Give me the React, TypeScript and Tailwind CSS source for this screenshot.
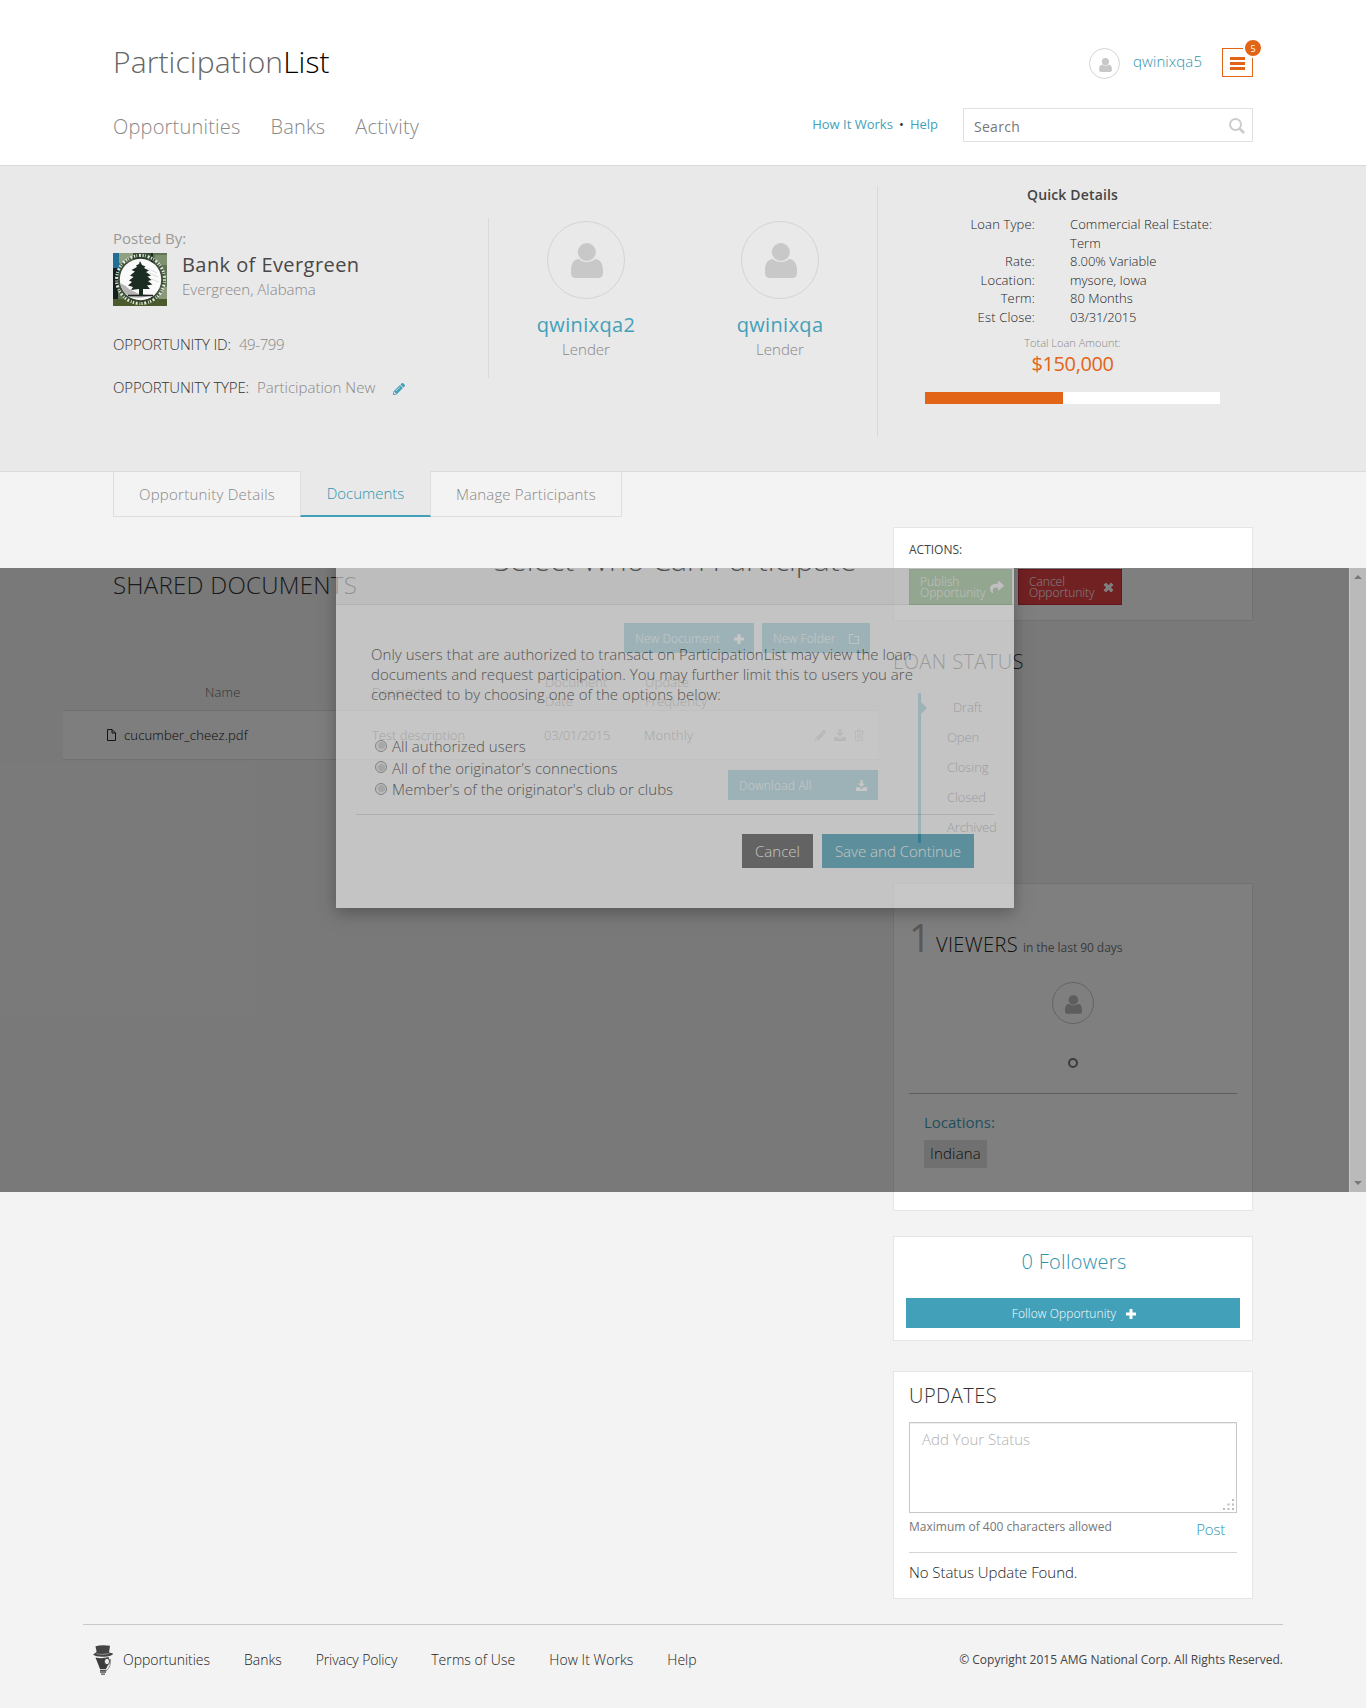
import type { ReactNode } from 'react';
import { FaPencilAlt, FaShare } from 'react-icons/fa';

function UserIcon({ className }: { className: string }) {
  return (
    <svg viewBox="0 0 96 105" className={className} fill="currentColor">
      <circle cx="47.500" cy="27" r="27" />
      <path d="M24 48C34 60 62 60 72 48C88 49 96 62 96 82V90Q96 105 81 105H15Q0 105 0 90V82C0 62 8 49 24 48Z" />
    </svg>
  );
}

function PlusIcon({ className }: { className: string }) {
  return (
    <svg viewBox="0 0 10 10" className={className} fill="currentColor">
      <path d="M3.500 0.500Q3.500 0 4 0H6Q6.500 0 6.500 0.500V3.500H9.500Q10 3.500 10 4V6Q10 6.500 9.500 6.500H6.500V9.500Q6.500 10 6 10H4Q3.500 10 3.500 9.500V6.500H0.500Q0 6.500 0 6V4Q0 3.500 0.500 3.500H3.500Z" />
    </svg>
  );
}

function DownloadIcon({ className }: { className: string }) {
  return (
    <svg viewBox="0 0 12 12" className={className} fill="currentColor">
      <path d="M4.800 0H7.200V3.800H9.800L6 7.800L2.200 3.800H4.800Z" />
      <path d="M0.600 8H3.600L6 10.200L8.400 8H11.400Q12 8 12 8.600V11.400Q12 12 11.400 12H0.600Q0 12 0 11.400V8.600Q0 8 0.600 8Z" />
    </svg>
  );
}

function FileIcon() {
  return (
    <svg viewBox="0 0 10 12" className="h-3 w-2.5" fill="none" stroke="currentColor" strokeWidth="0.900">
      <path d="M1.500 0.500H6L9.500 4V11.500H1.500Z" />
      <path d="M6 0.500V4H9.500" />
    </svg>
  );
}

function TrashIcon() {
  return (
    <svg viewBox="0 0 10 12" className="h-3 w-2.5" fill="none" stroke="currentColor" strokeWidth="0.800">
      <path d="M0 2.500H10M3.500 2.500V0.800H6.500V2.500M1.500 2.500V11.500H8.500V2.500M3.700 4.500V9.500M5 4.500V9.500M6.300 4.500V9.500" />
    </svg>
  );
}

function FolderIcon() {
  return (
    <svg viewBox="0 0 12 10" className="h-2.5 w-3" fill="none" stroke="currentColor" strokeWidth="0.800">
      <path d="M1.500 0.500V9.500H10.500V2.500H6.500M1.500 0.500H5.500" />
    </svg>
  );
}

function BankLogo() {
  return (
    <svg viewBox="0 0 54 53" className="h-[53px] w-[54px] shrink-0">
      <rect width="54" height="53" fill="#5f7355" />
      <rect width="6" height="22" fill="#1f6f96" />
      <rect y="15" width="5" height="32" fill="#14201f" />
      <rect x="6" y="0" width="14" height="10" fill="#8fa083" />
      <rect x="20" width="18" height="6" fill="#3a4e38" />
      <rect x="38" width="2" height="53" fill="#1d2a20" />
      <rect x="42" y="2" width="12" height="10" fill="#7d9170" />
      <rect x="46" y="34" width="8" height="12" fill="#8b9a7c" />
      <rect y="46" width="54" height="7" fill="#4a5a2c" />
      <circle cx="27.500" cy="26.500" r="22.500" fill="none" stroke="#1d2b20" strokeWidth="4" opacity="0.500" />
      <circle cx="27.500" cy="26.500" r="24" fill="none" stroke="#dfe6da" strokeWidth="3" strokeDasharray="1.300 1.200 .8 1.900 2 1.600" />
      <circle cx="27.500" cy="26.500" r="20.700" fill="#fafafa" />
      <path d="M7 30Q12 32 16 36Q22 39 26 41L38 42Q30 46 17 44Q9 39 7 30Z" fill="#b4b4b4" />
      <path d="M34 15L44 20M36 20L45 24M38 26L46 29" stroke="#ddd" strokeWidth="1" />
      <path d="M15 42.500H40" stroke="#222" strokeWidth="1.500" />
      <path
        d="M27 8L29 12L32.500 13.500L31 15L36 17.500L33 19L38 22.500L34.500 23.500L38.500 27L35 28L39.500 31.500L34 32.500L37 36L30 36V43H26V36L18 37L20 34L15 32.500L19 29L16 27.500L20.500 24L17 22.500L22 18.500L18.500 17L24 14L23 12.500L26 11Z"
        fill="#1c2d24"
      />
    </svg>
  );
}

function FooterLogo() {
  return (
    <svg viewBox="0 0 20 30" className="h-[30px] w-5">
      <path d="M2.500 1.200Q9 -0.500 17 0.800L16 8Q9 9 3.800 8Z" fill="#444" />
      <path d="M0 9.800L3.500 7Q10 9 16 7.500L20 8.500Q20 10.500 14 11.500Q4 12.500 0 9.800Z" fill="#444" />
      <path d="M3.500 8.800Q10 10.300 16 8.600" fill="none" stroke="#aaa" strokeWidth="0.700" />
      <path d="M2.500 12.500Q9 14 15.500 12L17 16L13 24H7Z" fill="#3c3c3c" />
      <ellipse cx="14" cy="16.500" rx="2.500" ry="3.200" fill="#f2f2f2" stroke="#444" />
      <path d="M17.500 14Q18 22 13.500 25.500" fill="none" stroke="#777" strokeWidth="0.800" />
      <path d="M7 25.500H13.500M7 27.200H13M8 29.200H12" stroke="#555" strokeWidth="1.300" />
    </svg>
  );
}

function Lender({ name }: { name: string }) {
  return (
    <div className="flex w-[194px] flex-col items-center pt-[3px]">
      <div className="flex size-[78px] items-center justify-center rounded-full border border-[#d4d4d4] text-[#c8c8c8]">
        <UserIcon className="ml-px mt-px h-[35px] w-8" />
      </div>
      <div className="mt-[12px] text-[20px] font-medium leading-7 tracking-[0.35px] text-[#43a0b9]">{name}</div>
      <div className="text-[15px] font-light leading-5 text-[#888]">Lender</div>
    </div>
  );
}

const details: [string, string][] = [
  ['Loan Type:', 'Commercial Real Estate: Term'],
  ['Rate:', '8.00% Variable'],
  ['Location:', 'mysore, Iowa'],
  ['Term:', '80 Months'],
  ['Est Close:', '03/31/2015'],
];

function Panel({ className, children }: { className: string; children: ReactNode }) {
  return <section className={`border border-[#e5e5e5] bg-white ${className}`}>{children}</section>;
}

function Header() {
  return (
    <header className="h-[166px] border-b border-[#d9d9d9] bg-white">
      <div className="mx-auto flex w-[1140px] justify-between">
        <div className="pt-[42px]">
          <div className="text-[30px] font-light leading-10 tracking-[0.1px] text-[#666]">
            Participation<span className="text-black">List</span>
          </div>
          <nav className="mt-[31px] flex gap-[30px] text-[20px] font-light leading-7 tracking-[0.19px] text-[#888]">
            <a>Opportunities</a>
            <a>Banks</a>
            <a>Activity</a>
          </nav>
        </div>
        <div className="flex flex-col items-end pt-12">
          <div className="flex">
            <div className="flex size-[31px] items-center justify-center rounded-full border border-[#d4d4d4] text-[#c8c8c8]">
              <UserIcon className="ml-[2px] mt-[2px] h-[14px] w-[13px]" />
            </div>
            <div className="ml-[13px] mt-[3px] w-[89px] text-[15px] font-light leading-5 tracking-[0.08px] text-[#2f93ae]">qwinixqa5</div>
            <div className="relative flex h-[29px] w-[31px] flex-col items-center justify-center gap-[2px] border border-[#e26417] pt-px">
              <div className="h-[3px] w-[15px] bg-[#e26417]" />
              <div className="h-[3px] w-[15px] bg-[#e26417]" />
              <div className="h-[3px] w-[15px] bg-[#e26417]" />
              <div className="absolute -right-[11px] -top-[11px] flex size-5 items-center justify-center rounded-full border-2 border-white bg-[#e26417] text-[9px] leading-none text-white">
                5
              </div>
            </div>
          </div>
          <div className="mt-[29px] flex">
            <div className="mt-[6px] flex text-[13px] leading-5 text-[#43a0b9]">
              <a>How It Works</a>
              <span className="w-[17px] text-center text-[#333]">•</span>
              <a>Help</a>
            </div>
            <div className="ml-[25px] flex h-[34px] w-[290px] items-center justify-between border border-[#e0e0e0] pl-[10px] pr-[7px]">
              <span className="mt-[3px] text-[14px] leading-5 tracking-[0.28px] text-[#777]">Search</span>
              <svg viewBox="0 0 16 16" className="mt-px size-4" fill="none" stroke="#ccc">
                <circle cx="6.500" cy="6.500" r="5.500" strokeWidth="2" />
                <path d="M10.500 10.500L15 15" strokeWidth="2.600" />
              </svg>
            </div>
          </div>
        </div>
      </div>
    </header>
  );
}

function Hero() {
  return (
    <section className="h-[306px] border-b border-[#dadada] bg-[#e9e9e9]">
      <div className="mx-auto flex w-[1140px] items-start">
        <div className="w-[375px] pt-[62px]">
          <div className="text-[15px] leading-5 text-[#999]">Posted By:</div>
          <div className="mt-[5px] flex items-start">
            <BankLogo />
            <div className="-mt-[2px] ml-[15px]">
              <div className="text-[20px] font-medium leading-7 tracking-[0.43px] text-[#484848]">Bank of Evergreen</div>
              <div className="text-[15px] font-light leading-5 text-[#888]">Evergreen, Alabama</div>
            </div>
          </div>
          <div className="mt-7 flex text-[15px] font-light leading-5 text-[#888]">
            <span className="mr-2 tracking-[-0.160px] text-[#333]">OPPORTUNITY ID:</span>
            <span className="tracking-[-0.400px]">49-799</span>
          </div>
          <div className="mt-[23px] flex text-[15px] font-light leading-5 text-[#888]">
            <span className="mr-2 tracking-[-0.160px] text-[#333]">OPPORTUNITY TYPE:</span>
            <span>Participation New</span>
            <FaPencilAlt className="ml-[18px] mt-[6px] size-3 text-[#43a0b9]" />
          </div>
        </div>
        <div className="mt-[52px] flex h-40 w-[389px] border-l border-[#d9d9d9]">
          <Lender name="qwinixqa2" />
          <Lender name="qwinixqa" />
        </div>
        <div className="mt-5 h-[251px] border-l border-[#d9d9d9] pl-[47px]">
          <div className="-mt-px w-[295px]">
            <div className="text-center text-[14px] font-semibold leading-5 tracking-[0.15px] text-[#444]">Quick Details</div>
            <dl className="mt-[10px] grid grid-cols-[110px_150px] gap-x-[35px] text-[13px] font-light leading-[18.570px] text-[#222]">
              {details.map(([k, v]) => (
                <div key={k} className="contents">
                  <dt className="text-right tracking-[0.15px]">{k}</dt>
                  <dd className={k === 'Est Close:' ? 'tracking-[-0.200px]' : k === 'Loan Type:' ? 'tracking-[0.08px]' : ''}>{v}</dd>
                </div>
              ))}
            </dl>
            <div className="mt-[9px] text-center text-[11px] font-light leading-4 text-[#888]">Total Loan Amount:</div>
            <div className="mt-px text-center text-[20px] font-medium leading-6 tracking-[-0.400px] text-[#e26417]">$150,000</div>
            <div className="mt-[16px] h-3 bg-white">
              <div className="h-full w-[138px] bg-[#e26417]" />
            </div>
          </div>
        </div>
      </div>
    </section>
  );
}

function SharedDocuments() {
  return (
    <div className="w-[780px] pr-[15px] pt-[52px]">
      <h2 className="text-[24px] font-light leading-8 tracking-[0.26px] text-[#333]">SHARED DOCUMENTS</h2>
      <div className="mt-[22px] flex justify-end gap-2 pr-2 text-[12px] font-light tracking-[0.12px] text-white">
        <div className="flex h-[30px] w-[130px] items-center justify-between bg-[#43a0b9] pl-[11px] pr-[10px] pt-px">
          New Document
          <PlusIcon className="size-[10px]" />
        </div>
        <div className="flex h-[30px] w-[108px] items-center justify-between bg-[#43a0b9] pl-[11px] pr-[10px] pt-px">
          New Folder
          <FolderIcon />
        </div>
      </div>
      <div className="-ml-[50px] text-[13px] font-light text-[#666]">
        <div className="grid h-[57px] grid-cols-[308px_172px_101px_80px] items-center pt-[20px] leading-[19px] tracking-[0.15px]">
          <span className="pl-[142px]">Name</span>
          <span className="pl-px">Description</span>
          <span className="w-16 pl-[2px]">Document Date</span>
          <span className="w-16 pl-px">Update Frequency</span>
        </div>
        <div className="grid h-[50px] grid-cols-[308px_172px_101px_171px_auto] items-center border-y border-[#e0e0e0] bg-[#fcfcfc] leading-5 text-[#555]">
          <span className="flex items-center pl-[43px] tracking-[0.15px] text-[#111]">
            <FileIcon />
            <span className="ml-2">cucumber_cheez.pdf</span>
          </span>
          <span className="pl-px">Test description</span>
          <span className="pl-px tracking-[-0.200px]">03/01/2015</span>
          <span className="tracking-[0.25px]">Monthly</span>
          <span className="flex items-center gap-[8px] text-[#bbb]">
            <FaPencilAlt className="size-[11px]" />
            <DownloadIcon className="size-3" />
            <TrashIcon />
          </span>
        </div>
      </div>
      <div className="ml-auto mt-[10px] flex h-[30px] w-[150px] items-center justify-between bg-[#43a0b9] pl-[11px] pr-[11px] pt-px text-[12px] font-light tracking-[0.2px] text-white">
        Download All
        <DownloadIcon className="size-[11px]" />
      </div>
    </div>
  );
}

function Sidebar() {
  return (
    <aside className="w-[360px] pt-[10px]">
      <Panel className="h-[94px] px-[15px] pt-[14px]">
        <div className="text-[12px] leading-4 text-[#444]">ACTIONS:</div>
        <div className="mt-[11px] flex gap-[6px] text-[12px] font-light leading-[11px] text-white">
          <div className="flex h-9 w-[103px] items-center border border-[#2a7a1e] bg-[#348a27] pl-[10px]">
            <span className="w-[66px]">Publish Opportunity</span>
            <FaShare className="ml-1 size-[14px]" />
          </div>
          <div className="flex h-9 w-[104px] items-center border border-[#c62f34] bg-[#e44247] pl-[10px]">
            <span className="w-[66px]">Cancel Opportunity</span>
            <PlusIcon className="ml-2 size-[11px] rotate-45" />
          </div>
        </div>
      </Panel>

      <h3 className="mt-[27px] text-[20px] font-light leading-7 tracking-[0.4px] text-[#333]">LOAN STATUS</h3>
      <div className="ml-[25px] mt-[17px] flex h-[150px]">
        <div className="w-[3px] bg-[#43a0b9]" />
        <div className="mt-[9px] size-0 border-y-[6px] border-l-[6px] border-y-transparent border-l-[#43a0b9]" />
        <ul className="ml-5 mt-1 space-y-[10px] text-[13px] font-light leading-5 tracking-[-0.100px] text-[#333]">
          <li className="pl-[6px]">Draft</li>
          <li>Open</li>
          <li>Closing</li>
          <li>Closed</li>
          <li>Archived</li>
        </ul>
      </div>

      <Panel className="mt-10 h-[328px] px-[15px] pt-[34px]">
        <div className="flex h-[38px] items-baseline">
          <span className="w-[27px] text-[38px] font-medium leading-[39px] text-[#b5b2ae]">1</span>
          <span className="text-[20px] font-light leading-7 tracking-[0.38px] text-[#222]">VIEWERS</span>
          <span className="ml-[5px] text-[12px] leading-4 tracking-[-0.050px] text-[#777]">in the last 90 days</span>
        </div>
        <div className="mx-auto mt-[26px] flex size-[42px] items-center justify-center rounded-full border border-[#c8c8c8] text-[#bbb]">
          <UserIcon className="ml-px mt-[2px] h-[19px] w-[17px]" />
        </div>
        <div className="mx-auto mt-[34px] size-[10px] rounded-full border-2 border-[#777]" />
        <div className="mt-[25px] h-px bg-[#bbb]" />
        <div className="ml-[15px] mt-[18px] text-[15px] leading-5 text-[#43a0b9]">Locations:</div>
        <div className="ml-[15px] mt-2 h-7 w-[63px] bg-[#e0e0e0] pl-[6px] pt-[3px] text-[15px] font-light leading-5 tracking-[0.18px] text-[#222]">
          Indiana
        </div>
      </Panel>

      <Panel className="mt-[25px] h-[105px] px-3 pt-[11px]">
        <div className="pl-[2px] text-center text-[20px] font-light leading-7 tracking-[0.3px] text-[#2f93ae]">0 Followers</div>
        <div className="mt-[22px] flex h-[30px] items-center justify-center gap-[10px] bg-[#43a0b9] pl-[2px] pt-px text-[12px] font-light tracking-[0.08px] text-white">
          Follow Opportunity
          <PlusIcon className="size-[10px]" />
        </div>
      </Panel>

      <Panel className="mt-[30px] h-[228px] px-[15px] pt-[10px]">
        <h3 className="text-[20px] font-light leading-7 tracking-[0.5px] text-[#333]">UPDATES</h3>
        <div className="relative mt-[12px] h-[91px] border border-[#c8c8c8] pl-3 pt-[6px] text-[15px] font-light leading-5 text-[#b0b0b0] shadow-[inset_0_1px_1px_rgba(0,0,0,0.075)]">
          Add Your Status
          <svg viewBox="0 0 12 12" className="absolute bottom-px right-px size-3" fill="#bbb">
            <path d="M9 0h2v2h-2zM9 4.500h2v2h-2zM9 9h2v2h-2zM4.500 4.500h2v2h-2zM4.500 9h2v2h-2zM0 9h2v2h-2z" />
          </svg>
        </div>
        <div className="flex justify-between pr-3">
          <span className="mt-[6px] text-[12px] leading-4 text-[#777]">Maximum of 400 characters allowed</span>
          <a className="mt-[6px] text-[15px] font-light leading-5 tracking-[-0.200px] text-[#2f93ae]">Post</a>
        </div>
        <div className="mt-[13px] h-px bg-[#d4d4d4]" />
        <p className="mt-[9px] text-[15px] font-light leading-5 tracking-[-0.060px] text-[#222]">No Status Update Found.</p>
      </Panel>
    </aside>
  );
}

function ParticipantDialog() {
  return (
    <div className="absolute left-[336px] -top-[48px] h-[388px] w-[678px] bg-white font-light text-[#333] opacity-[0.56] shadow-[0_5px_15px_rgba(0,0,0,0.5)]">
      <div className="h-[85px] border-b border-[#e0e0e0] bg-[#f2f2f2] pt-[20px] text-center text-[30px] leading-10 tracking-[0.05px]">Select Who Can Participate</div>
      <div className="ml-[35px] mt-[39px] whitespace-nowrap text-[15px] leading-5 tracking-[0.03px]">
        Only users that are authorized to transact on ParticipationList may view the loan
        <br />
        documents and request participation. You may further limit this to users you are
        <br />
        connected to by choosing one of the options below:
      </div>
      <div className="ml-[39px] mt-8 text-[15px] leading-[21.500px] tracking-[0.03px]">
        {['All authorized users', "All of the originator's connections", "Member's of the originator's club or clubs"].map((label) => (
          <label key={label} className="flex h-[21.500px] items-start">
            <span className="mr-[5px] mt-[3.500px] flex size-3 items-center justify-center rounded-full border border-[#8a8a8a] bg-[#eee]">
              <span className="size-[7px] rounded-full bg-[#c4c8cc]" />
            </span>
            <span>{label}</span>
          </label>
        ))}
      </div>
      <div className="ml-[20px] mr-5 mt-[13.500px] h-px bg-[#d8d8d8]" />
      <div className="mt-[19px] flex justify-end gap-[9px] pr-10 text-[15px] leading-[35px] text-white">
        <div className="h-[34px] w-[71px] bg-[#525252] text-center">Cancel</div>
        <div className="h-[34px] w-[152px] bg-[#46a1b6] text-center">Save and Continue</div>
      </div>
    </div>
  );
}

export default function App() {
  return (
    <div className="relative h-[1708px] w-[1366px] overflow-hidden bg-[#f3f3f3] font-['Open_Sans',sans-serif]">
      <Header />
      <Hero />
      <main className="mx-auto w-[1140px]">
        <div className="flex text-[15px] font-light leading-5 text-[#888]">
          <div className="h-[45px] w-[187px] border-b border-l border-[#dedede] pt-3 text-center tracking-[0.24px]">Opportunity Details</div>
          <div className="relative -mt-px h-[46px] w-[131px] border-x border-b-2 border-x-[#dedede] border-b-[#43a0b9] bg-[#e9e9e9] pt-3 text-center text-[#2f93ae]">
            Documents
          </div>
          <div className="h-[45px] w-[191px] border-b border-r border-[#dedede] pt-3 text-center tracking-[0.16px]">Manage Participants</div>
        </div>
        <div className="flex items-start">
          <SharedDocuments />
          <Sidebar />
        </div>
      </main>
      <footer className="mx-auto mt-[25px] flex w-[1200px] border-t border-[#c8c8c8] pt-5 text-[14px] font-light leading-5 text-[#222]">
        <div className="ml-[10px]">
          <FooterLogo />
        </div>
        <nav className="ml-[10px] mt-[5px] flex gap-[34px]">
          <a className="tracking-[-0.040px]">Opportunities</a>
          <a>Banks</a>
          <a className="tracking-[-0.120px]">Privacy Policy</a>
          <a className="tracking-[0.06px]">Terms of Use</a>
          <a className="tracking-[0.06px]">How It Works</a>
          <a>Help</a>
        </nav>
        <span className="ml-auto mt-[5px] text-[12px] font-normal text-[#444]">© Copyright 2015 AMG National Corp. All Rights Reserved.</span>
      </footer>

      <div className="absolute left-0 top-[568px] flex h-[624px] w-full justify-end overflow-hidden bg-black/50">
        <ParticipantDialog />
        <div className="relative flex w-[17px] flex-col items-center justify-between border-l border-[#c9c9c9] bg-[#bababa] py-[7px]">
          <div className="size-0 border-x-4 border-b-4 border-x-transparent border-b-[#777]" />
          <div className="size-0 border-x-4 border-t-4 border-x-transparent border-t-[#777]" />
        </div>
      </div>
    </div>
  );
}
